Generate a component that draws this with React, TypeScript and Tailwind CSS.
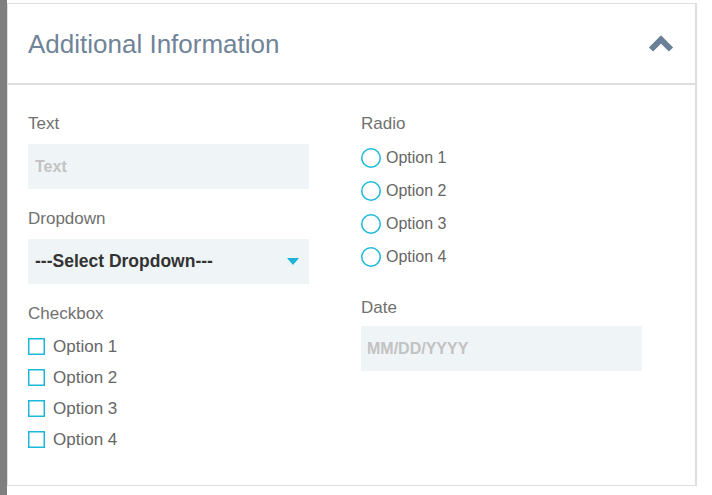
import React from "react";

const font = { fontFamily: '"Liberation Sans", Arial, sans-serif' };

function Label({ children }: { children: React.ReactNode }) {
  return <div className="text-[17px] leading-5 text-[#707070]">{children}</div>;
}

function CheckboxRow({ label }: { label: string }) {
  return (
    <label className="flex h-[31px] items-center gap-2">
      <svg width="17" height="17" viewBox="0 0 17 17" className="shrink-0">
        <rect x="0.75" y="0.75" width="15.5" height="15.5" fill="white" stroke="#1bb8d9" strokeWidth="1.5" />
      </svg>
      <span className="text-[17px] text-[#666]">{label}</span>
    </label>
  );
}

function RadioRow({ label }: { label: string }) {
  return (
    <label className="flex h-[33px] items-center gap-[5px]">
      <svg width="20" height="20" viewBox="0 0 20 20" className="shrink-0">
        <circle cx="10" cy="10" r="9.25" fill="white" stroke="#1bb8d9" strokeWidth="1.5" />
      </svg>
      <span className="text-base text-[#666]">{label}</span>
    </label>
  );
}

export default function App() {
  const options = ["Option 1", "Option 2", "Option 3", "Option 4"];

  return (
    <div className="flex min-h-[495px] bg-white" style={font}>
      <div className="w-[7px] shrink-0 bg-[#7f7f7f]" />

      <div className="pt-[3px]">
        <section className="w-[690px] border-t border-b border-l border-r-2 border-[#dedede] bg-white">
          {/* collapsible header */}
          <div className="flex h-[81px] items-center justify-between border-b-2 border-[#dedede] pl-5 pr-[21px]">
            <h2 className="text-[26px] leading-none text-[#6f8498]">Additional Information</h2>
            <svg width="26" height="17" viewBox="0 0 26 17">
              <path d="M3 14.5 L13 4.5 L23 14.5" fill="none" stroke="#6a8096" strokeWidth="6" strokeLinejoin="miter" />
            </svg>
          </div>

          <div className="grid grid-cols-[333px_1fr] pt-[29px] pb-[30px] pl-5">
            <div>
              <Label>Text</Label>
              <div className="mt-[10px] flex h-[45px] w-[281px] items-center bg-[#eff4f7] px-[7px] text-base font-bold text-[#c2c2c2]">
                Text
              </div>

              <div className="mt-[20px]">
                <Label>Dropdown</Label>
              </div>
              <div className="mt-[10px] flex h-[45px] w-[281px] items-center justify-between bg-[#eff4f7] pl-[7px] pr-[10px]">
                <span className="text-[17.5px] font-bold text-[#333]">---Select Dropdown---</span>
                <svg width="12" height="7" viewBox="0 0 12 7">
                  <path d="M0 0 H12 L6 7 Z" fill="#1ab4d8" />
                </svg>
              </div>

              <div className="mt-[20px]">
                <Label>Checkbox</Label>
              </div>
              <div className="pt-[7px]">
                {options.map((o) => (
                  <CheckboxRow key={o} label={o} />
                ))}
              </div>
            </div>

            <div>
              <Label>Radio</Label>
              <div className="pt-[7px]">
                {options.map((o) => (
                  <RadioRow key={o} label={o} />
                ))}
              </div>

              <div className="mt-[25px]">
                <Label>Date</Label>
              </div>
              <div className="mt-[8px] flex h-[45px] w-[281px] items-center bg-[#eff4f7] px-[6px] text-base font-bold text-[#c2c2c2]">
                MM/DD/YYYY
              </div>
            </div>
          </div>
        </section>
      </div>
    </div>
  );
}
